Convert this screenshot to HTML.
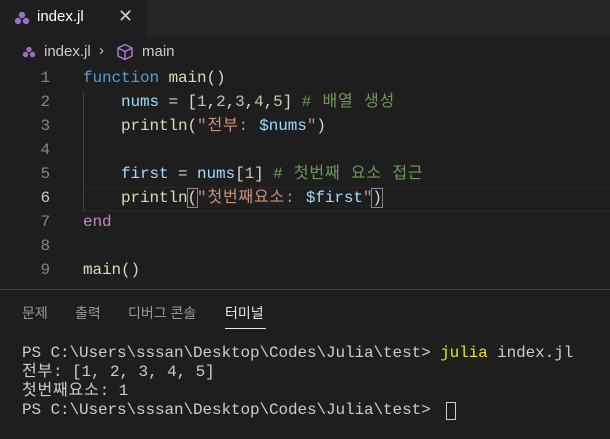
<html><head><style>
body{margin:0;width:610px;height:439px;background:#1e1e1e;overflow:hidden;position:relative;font-family:"Liberation Sans","Noto Sans CJK KR",sans-serif}
.mono{font-family:"Liberation Mono","Noto Sans CJK KR",monospace;font-size:16px;letter-spacing:-0.1px;white-space:pre}
.mono div{line-height:20px;height:20px}
.abs{position:absolute}
.ln{position:absolute;left:0;width:50px;text-align:right;color:#858585}
.code{position:absolute;left:83px}
.k{color:#569cd6}.f{color:#dcdcaa}.v{color:#9cdcfe}.n{color:#b5cea8}.c{color:#6a9955}.s{color:#ce9178}.e{color:#c586c0}.t{color:#d4d4d4}
.ko{letter-spacing:0.8px}
</style></head><body>
<div class="abs" style="left:0;top:0;width:610px;height:37px;background:#252526"></div>
<div class="abs" style="left:0;top:0;width:146px;height:37px;background:#1e1e1e"></div>
<svg class="abs" style="left:14px;top:11px" width="16" height="14"><circle cx="8" cy="4" r="3.2" fill="#9b6fc7"/><circle cx="4" cy="10" r="3.2" fill="#9b6fc7"/><circle cx="12" cy="10" r="3.2" fill="#9b6fc7"/></svg>
<div class="abs" style="left:37px;top:8px;color:#fff;font-size:15px">index.jl</div>
<div class="abs" style="left:118px;top:6px;color:#ccc;font-size:18px">✕</div>
<svg class="abs" style="left:22px;top:46px" width="14" height="12"><circle cx="7" cy="3.5" r="2.7" fill="#9b6fc7"/><circle cx="3.5" cy="8.5" r="2.7" fill="#9b6fc7"/><circle cx="10.5" cy="8.5" r="2.7" fill="#9b6fc7"/></svg>
<div class="abs" style="left:44px;top:43px;color:#ccc;font-size:15px">index.jl</div>
<div class="abs" style="left:99px;top:42px;color:#ccc;font-size:15px">›</div>
<svg class="abs" style="left:116px;top:43px" width="18" height="18" fill="none" stroke="#b180d7" stroke-width="1.4"><path d="M9 1.5L16 5v8l-7 3.5L2 13V5z M2 5l7 3.5L16 5 M9 8.5v8"/></svg>
<div class="abs" style="left:142px;top:43px;color:#ccc;font-size:15px">main</div>
<div class="abs" style="left:83px;top:187px;width:527px;height:22px;border-top:1px solid #282828;border-bottom:1px solid #282828"></div>
<div class="abs" style="left:83px;top:92px;width:1px;height:120px;background:#404040"></div>
<div class="mono">
<div class="ln" style="top:68px">1</div><div class="code" style="top:68px"><span class="k">function</span> <span class="f">main</span><span class="t">()</span></div>
<div class="ln" style="top:92px">2</div><div class="code" style="top:92px">    <span class="v">nums</span><span class="t"> = [</span><span class="n">1</span><span class="t">,</span><span class="n">2</span><span class="t">,</span><span class="n">3</span><span class="t">,</span><span class="n">4</span><span class="t">,</span><span class="n">5</span><span class="t">] </span><span class="c ko"># 배열 생성</span></div>
<div class="ln" style="top:116px">3</div><div class="code" style="top:116px">    <span class="f">println</span><span class="t">(</span><span class="s ko">"전부: </span><span class="v">$nums</span><span class="s">"</span><span class="t">)</span></div>
<div class="ln" style="top:140px">4</div>
<div class="ln" style="top:164px">5</div><div class="code" style="top:164px">    <span class="v">first</span><span class="t"> = </span><span class="v">nums</span><span class="t">[</span><span class="n">1</span><span class="t">] </span><span class="c ko"># 첫번째 요소 접근</span></div>
<div class="ln" style="top:188px;color:#c6c6c6">6</div><div class="code" style="top:188px">    <span class="f">println</span><span class="t" style="outline:1px solid #888">(</span><span class="s ko">"첫번째요소: </span><span class="v">$first</span><span class="s">"</span><span class="t" style="outline:1px solid #888">)</span></div>
<div class="ln" style="top:212px">7</div><div class="code" style="top:212px"><span class="e">end</span></div>
<div class="ln" style="top:236px">8</div>
<div class="ln" style="top:260px">9</div><div class="code" style="top:260px"><span class="f">main</span><span class="t">()</span></div>
</div>
<div class="abs" style="left:0;top:289px;width:610px;height:1px;background:#414141"></div>
<div class="abs" style="left:22px;top:303px;font-size:14px;color:#999">문제</div>
<div class="abs" style="left:75px;top:303px;font-size:14px;color:#999">출력</div>
<div class="abs" style="left:128px;top:303px;font-size:14px;color:#999">디버그 콘솔</div>
<div class="abs" style="left:225px;top:303px;font-size:14px;color:#e7e7e7">터미널</div>
<div class="abs" style="left:225px;top:328px;width:41px;height:1px;background:#e7e7e7"></div>
<div class="mono" style="color:#ccc">
<div class="abs" style="left:22px;top:343px">PS C:\Users\sssan\Desktop\Codes\Julia\test> <span style="color:#e5e510">julia</span> index.jl</div>
<div class="abs" style="left:22px;top:362px"><span class="ko">전부</span>: [1, 2, 3, 4, 5]</div>
<div class="abs" style="left:22px;top:381px"><span class="ko">첫번째요소</span>: 1</div>
<div class="abs" style="left:22px;top:400px">PS C:\Users\sssan\Desktop\Codes\Julia\test> </div>
</div>
<div class="abs" style="left:446px;top:402px;width:8px;height:16px;border:1px solid #ccc"></div>
</body></html>
